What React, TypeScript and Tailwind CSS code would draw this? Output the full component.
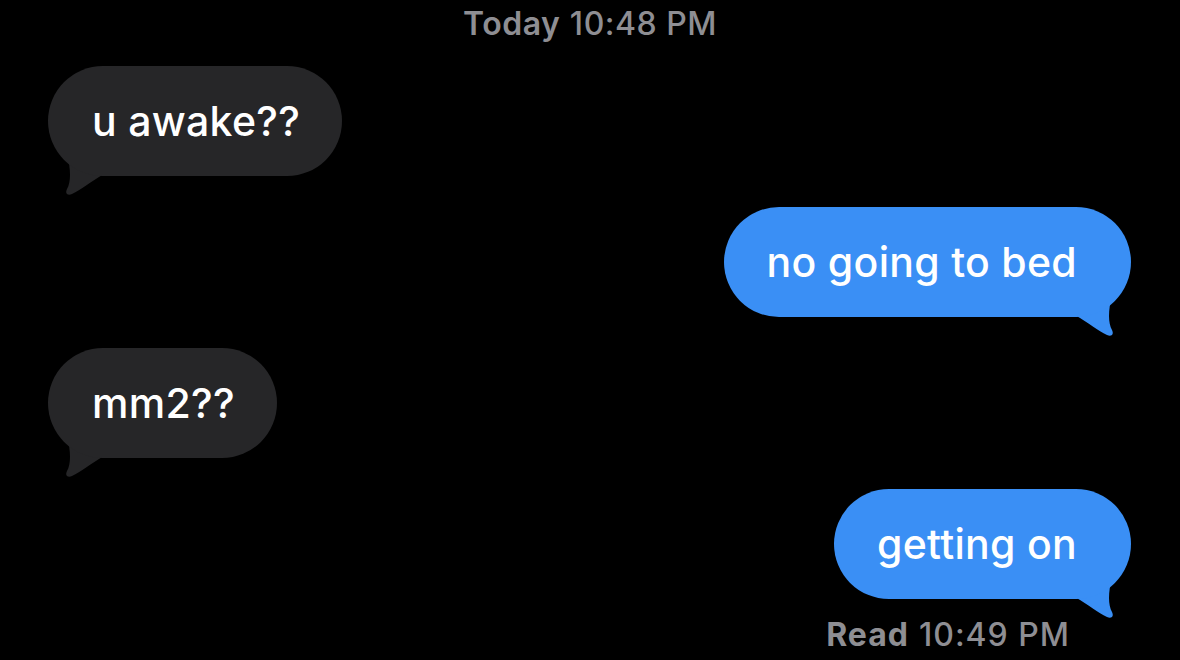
type Side = "in" | "out";

interface Msg {
  side: Side;
  text: string;
}

const messages: Msg[] = [
  { side: "in", text: "u awake??" },
  { side: "out", text: "no going to bed" },
  { side: "in", text: "mm2??" },
  { side: "out", text: "getting on" },
];

// little hooked tail under the bubble corner
function Tail({ side, color }: { side: Side; color: string }) {
  return (
    <svg
      viewBox="0 0 60 140"
      width={60}
      height={140}
      className={
        side === "in"
          ? "pointer-events-none absolute left-0 top-0"
          : "pointer-events-none absolute right-0 top-0 -scale-x-100"
      }
    >
      <path
        d="M19 88 C23 104 23 116 19 123 C17 127 19 130 24 128 C33 124 42 116 56 108 L42 92 Z"
        fill={color}
      />
    </svg>
  );
}

function Bubble({ msg }: { msg: Msg }) {
  const incoming = msg.side === "in";
  const color = incoming ? "#262628" : "#3a8ff5";
  return (
    <div className={incoming ? "flex justify-start pl-[48px]" : "flex justify-end pr-[49px]"}>
      <div className="relative">
        <Tail side={msg.side} color={color} />
        <div
          className={
            "relative flex h-[110px] items-center rounded-[55px] text-[41px] font-medium leading-none tracking-[0.3px] text-white " +
            (incoming ? "bg-[#262628] pl-[44px] pr-[42px]" : "bg-[#3a8ff5] pl-[43px] pr-[54px]")
          }
        >
          {msg.text}
        </div>
      </div>
    </div>
  );
}

export default function App() {
  return (
    <div
      className="flex h-[660px] w-full flex-col overflow-hidden bg-black"
      style={{ fontFamily: "Inter, 'Noto Sans', sans-serif" }}
    >
      <div className="pt-[5px] text-center text-[32px] leading-[38px] tracking-[0.5px] text-[#8e8e93]">
        <span className="font-semibold">Today</span> <span className="font-medium">10:48 PM</span>
      </div>

      <div className="mt-[23px] flex flex-col gap-[31px]">
        {messages.map((m, i) => (
          <Bubble key={i} msg={m} />
        ))}
      </div>

      <div className="mt-[17px] pr-[110px] text-right text-[32px] leading-[38px] tracking-[1px] text-[#8e8e93]">
        <span className="font-bold">Read</span> <span className="font-medium">10:49 PM</span>
      </div>
    </div>
  );
}
